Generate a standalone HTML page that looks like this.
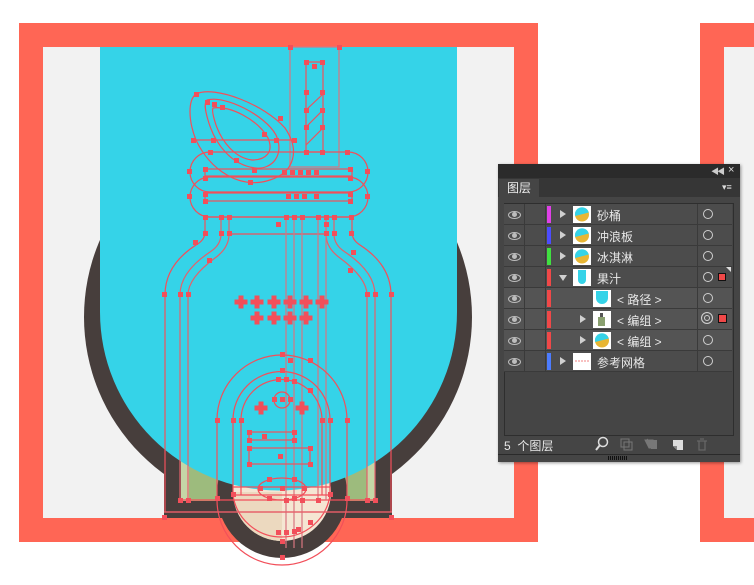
<!DOCTYPE html>
<html><head><meta charset="utf-8"><style>
html,body{margin:0;padding:0;background:#fff;width:754px;height:585px;overflow:hidden;position:relative;font-family:"Liberation Sans","Noto Sans CJK SC",sans-serif}
.abs{position:absolute}
.panel{left:498px;top:164px;width:242px;height:298px;background:#454545;box-shadow:1px 1px 3px rgba(0,0,0,.4)}
.row{position:absolute;left:6px;width:228px;height:20px;border-bottom:1px solid #3a3a3a;background:#4c4c4c}
.row.sub{background:#545454}
.row .c1{position:absolute;left:0;top:0;width:20px;height:20px;border-right:1px solid #3a3a3a}
.row .c2{position:absolute;left:21px;top:0;width:20px;height:20px;border-right:1px solid #3a3a3a}
.row .bar{position:absolute;left:43px;top:2px;width:4px;height:17px}
.row .tri{position:absolute;top:6px;width:0;height:0;border-top:4px solid transparent;border-bottom:4px solid transparent;border-left:6px solid #d0d0d0}
.row .th{position:absolute;top:2px;width:16px;height:15px;border:1px solid #fff;background:#fff;overflow:hidden}
.row .nm{position:absolute;top:3px;font-size:12px;color:#e8e8e8;white-space:nowrap}
.row .dv{position:absolute;left:193px;top:0;width:1px;height:20px;background:#3a3a3a}
.row .ci{position:absolute;left:199px;top:5px;width:8px;height:8px;border:1px solid #cfcfcf;border-radius:50%}
.eye{position:absolute;left:4px;top:7px;width:11px;height:6px;border:1px solid #bdbdbd;border-radius:50%}
.eye:after{content:"";position:absolute;left:3px;top:0;width:5px;height:5px;border-radius:50%;background:#bdbdbd}
</style></head><body>
<svg class="abs" style="left:0;top:0" width="754" height="585" viewBox="0 0 754 585">
<defs><path id="p" d="M-2.5 -6.5h5v4h4v5h-4v4h-5v-4h-4v-5h4z"/>
<g id="th"><circle cx="8" cy="7.5" r="7" fill="#e8b634"/><path d="M1.2 9 A7 7 0 0 1 14.8 5.5 Z" fill="#35d3e8"/></g></defs>
<rect x="19" y="23" width="519" height="519" fill="#ff6655"/>
<rect x="43" y="47" width="471" height="471" fill="#f2f2f2"/>
<rect x="700" y="23" width="60" height="519" fill="#ff6655"/>
<rect x="724" y="47" width="40" height="471" fill="#f2f2f2"/>
<circle cx="278" cy="317" r="194" fill="#473e3c"/>
<rect x="164" y="460" width="228" height="58" fill="#473e3c"/>
<rect x="181" y="440" width="194" height="61" fill="#9dbb7d"/>
<rect x="181" y="440" width="8" height="61" fill="#c5d6a6"/>
<rect x="367" y="440" width="8" height="61" fill="#c5d6a6"/>
<rect x="19" y="518" width="519" height="24" fill="#ff6655"/>
<rect x="700" y="518" width="60" height="24" fill="#ff6655"/>
<circle cx="282" cy="493" r="65" fill="#473e3c"/>
<circle cx="282" cy="492" r="49" fill="#f5e6d3"/>
<path d="M233 492 A49 49 0 0 0 282 541 L282 492Z" fill="#ecd9bf"/>
<path d="M100 47 H457 V312 A178.5 178.5 0 0 1 100 312 Z" fill="#35d3e8"/>
<g fill="none" stroke="#f24f5a" stroke-width="1.2">
<rect x="290" y="47" width="49" height="120" stroke="#d87680"/>
<rect x="306" y="62" width="17" height="90"/>
<path d="M306 110 L323 94 M306 127 L323 110 M306 145 L323 128"/>
<path d="M196 94 C215 85 265 105 285 128 C300 150 295 172 270 180 C240 190 210 170 196 140 C188 120 188 100 196 94Z"/>
<path d="M207 100 C225 95 265 115 276 135 C285 155 272 170 255 168 C232 165 215 145 208 120 C205 110 204 103 207 100Z"/>
<path d="M213 108 C230 105 258 120 268 138 C274 152 266 160 252 160 C235 158 222 142 216 125 C213 116 212 110 213 108Z"/>
<path d="M194 140 H293"/>
<rect x="190" y="152" width="178" height="40" rx="20"/>
<rect x="190" y="177" width="178" height="40" rx="20"/>
<rect x="205" y="169" width="147" height="7"/>
<rect x="205" y="193" width="147" height="8"/>
<path d="M205 217 H352 M229 234 H326"/>
<path d="M205 217 V232 Q205 240 196 245 Q165 265 165 295 V512 H391 V295 Q391 265 360 245 Q352 240 352 232 V217"/>
<path d="M221 217 V234 Q221 245 210 252 Q180 272 180 295 V500 M334 217 V234 Q334 245 345 252 Q375 272 375 295 V500" stroke="#e5606a"/>
<path d="M229 217 V234 Q229 248 215 258 Q188 278 188 295 V500 M326 217 V234 Q326 248 340 258 Q367 278 367 295 V500" stroke="#e5606a"/>
<path d="M180 500 H375" />
<path d="M286 217 V548 M294 217 V548 M302 217 V548 M318 217 V500 M326 217 V500" stroke="#d87680"/>
<path d="M217 498 V420 A65 65 0 0 1 347 420 V498"/>
<path d="M233 495 V420 A48.5 48.5 0 0 1 330 420 V495"/>
<path d="M241 495 V420 A40.5 40.5 0 0 1 322 420 V495"/>
<circle cx="282" cy="400" r="8"/>
<rect x="249" y="432" width="45" height="8"/>
<rect x="249" y="448" width="61" height="16"/>
<ellipse cx="282" cy="489" rx="24" ry="11"/>
<path d="M233 487 H330 M233 495 H330"/>
<path d="M217 500 A65 65 0 0 0 347 500"/>
<path d="M233 495 A49 49 0 0 0 330 495"/>
<path d="M164 512 H392" stroke="#e5606a"/>
</g>
<g fill="#f24f5a">
<use href="#p" x="241" y="302"/><use href="#p" x="257" y="302"/><use href="#p" x="274" y="302"/><use href="#p" x="290" y="302"/><use href="#p" x="306" y="302"/><use href="#p" x="322" y="302"/>
<use href="#p" x="257" y="318"/><use href="#p" x="274" y="318"/><use href="#p" x="290" y="318"/><use href="#p" x="306" y="318"/>
<use href="#p" x="261" y="408"/><use href="#p" x="302" y="408"/>
<g>
<rect x="288" y="45" width="5" height="5"/><rect x="337" y="45" width="5" height="5"/>
<rect x="304" y="60" width="5" height="5"/><rect x="320" y="60" width="5" height="5"/><rect x="312" y="64" width="5" height="5"/>
<rect x="304" y="90" width="5" height="5"/><rect x="320" y="90" width="5" height="5"/><rect x="304" y="108" width="5" height="5"/><rect x="320" y="108" width="5" height="5"/><rect x="304" y="125" width="5" height="5"/><rect x="320" y="125" width="5" height="5"/><rect x="304" y="150" width="5" height="5"/><rect x="320" y="150" width="5" height="5"/>
<rect x="194" y="92" width="5" height="5"/><rect x="205" y="100" width="5" height="5"/><rect x="212" y="102" width="5" height="5"/><rect x="220" y="105" width="5" height="5"/><rect x="278" y="116" width="5" height="5"/><rect x="262" y="132" width="5" height="5"/><rect x="274" y="138" width="5" height="5"/><rect x="191" y="138" width="5" height="5"/><rect x="211" y="138" width="5" height="5"/><rect x="292" y="138" width="5" height="5"/><rect x="234" y="158" width="5" height="5"/><rect x="252" y="168" width="5" height="5"/><rect x="248" y="180" width="5" height="5"/>
<rect x="208" y="150" width="5" height="5"/><rect x="345" y="150" width="5" height="5"/>
<rect x="187" y="169" width="5" height="5"/><rect x="365" y="169" width="5" height="5"/><rect x="187" y="194" width="5" height="5"/><rect x="365" y="194" width="5" height="5"/>
<rect x="203" y="167" width="5" height="5"/><rect x="348" y="167" width="5" height="5"/><rect x="203" y="176" width="5" height="5"/><rect x="348" y="176" width="5" height="5"/><rect x="290" y="170" width="5" height="5"/><rect x="298" y="170" width="5" height="5"/><rect x="306" y="170" width="5" height="5"/><rect x="314" y="170" width="5" height="5"/><rect x="282" y="170" width="5" height="5"/>
<rect x="203" y="192" width="5" height="5"/><rect x="348" y="192" width="5" height="5"/><rect x="203" y="199" width="5" height="5"/><rect x="348" y="199" width="5" height="5"/><rect x="286" y="194" width="5" height="5"/><rect x="294" y="194" width="5" height="5"/><rect x="302" y="194" width="5" height="5"/><rect x="314" y="194" width="5" height="5"/>
<rect x="203" y="215" width="5" height="5"/><rect x="219" y="215" width="5" height="5"/><rect x="227" y="215" width="5" height="5"/><rect x="284" y="215" width="5" height="5"/><rect x="292" y="215" width="5" height="5"/><rect x="300" y="215" width="5" height="5"/><rect x="316" y="215" width="5" height="5"/><rect x="324" y="215" width="5" height="5"/><rect x="332" y="215" width="5" height="5"/><rect x="349" y="215" width="5" height="5"/>
<rect x="203" y="231" width="5" height="5"/><rect x="219" y="231" width="5" height="5"/><rect x="227" y="231" width="5" height="5"/><rect x="324" y="231" width="5" height="5"/><rect x="332" y="231" width="5" height="5"/><rect x="349" y="231" width="5" height="5"/><rect x="276" y="222" width="5" height="5"/><rect x="324" y="222" width="5" height="5"/>
<rect x="193" y="240" width="5" height="5"/><rect x="207" y="258" width="5" height="5"/><rect x="351" y="250" width="5" height="5"/><rect x="348" y="268" width="5" height="5"/>
<rect x="162" y="292" width="5" height="5"/><rect x="178" y="292" width="5" height="5"/><rect x="186" y="292" width="5" height="5"/><rect x="365" y="292" width="5" height="5"/><rect x="373" y="292" width="5" height="5"/><rect x="389" y="292" width="5" height="5"/>
<rect x="280" y="352" width="5" height="5"/><rect x="288" y="358" width="5" height="5"/><rect x="308" y="358" width="5" height="5"/><rect x="280" y="368" width="5" height="5"/><rect x="276" y="377" width="5" height="5"/><rect x="284" y="377" width="5" height="5"/><rect x="292" y="379" width="5" height="5"/><rect x="308" y="388" width="5" height="5"/>
<rect x="280" y="397" width="5" height="5"/><rect x="272" y="397" width="5" height="5"/><rect x="288" y="397" width="5" height="5"/>
<rect x="215" y="418" width="5" height="5"/><rect x="231" y="418" width="5" height="5"/><rect x="239" y="418" width="5" height="5"/><rect x="320" y="418" width="5" height="5"/><rect x="328" y="418" width="5" height="5"/><rect x="345" y="418" width="5" height="5"/>
<rect x="247" y="430" width="5" height="5"/><rect x="292" y="430" width="5" height="5"/><rect x="247" y="438" width="5" height="5"/><rect x="292" y="438" width="5" height="5"/><rect x="262" y="434" width="5" height="5"/><rect x="247" y="446" width="5" height="5"/><rect x="308" y="446" width="5" height="5"/><rect x="247" y="462" width="5" height="5"/><rect x="308" y="462" width="5" height="5"/><rect x="278" y="454" width="5" height="5"/>
<rect x="267" y="477" width="5" height="5"/><rect x="292" y="477" width="5" height="5"/><rect x="258" y="486" width="5" height="5"/><rect x="302" y="486" width="5" height="5"/><rect x="280" y="486" width="5" height="5"/><rect x="267" y="496" width="5" height="5"/><rect x="292" y="496" width="5" height="5"/>
<rect x="215" y="496" width="5" height="5"/><rect x="345" y="496" width="5" height="5"/><rect x="231" y="492" width="5" height="5"/><rect x="328" y="492" width="5" height="5"/>
<rect x="178" y="498" width="5" height="5"/><rect x="186" y="498" width="5" height="5"/><rect x="365" y="498" width="5" height="5"/><rect x="373" y="498" width="5" height="5"/><rect x="284" y="498" width="5" height="5"/><rect x="300" y="498" width="5" height="5"/><rect x="316" y="498" width="5" height="5"/>
<rect x="162" y="515" width="5" height="5"/><rect x="389" y="515" width="5" height="5"/><rect x="308" y="520" width="5" height="5"/>
<rect x="276" y="530" width="5" height="5"/><rect x="284" y="530" width="5" height="5"/><rect x="292" y="529" width="5" height="5"/><rect x="296" y="527" width="5" height="5"/>
<rect x="280" y="539" width="5" height="5"/><rect x="280" y="555" width="5" height="5"/>
</g></g>
</svg>

<div class="abs panel">
  <div class="abs" style="left:0;top:0;width:242px;height:14px;background:#2b2b2b"></div>
  <div class="abs" style="left:213px;top:2px;font-size:8px;color:#ccc;letter-spacing:-2px">◀◀</div>
  <div class="abs" style="left:230px;top:0px;font-size:11px;color:#ddd">×</div>
  <div class="abs" style="left:0;top:14px;width:242px;height:19px;background:#363636"></div>
  <div class="abs" style="left:1px;top:15px;width:40px;height:19px;background:#454545;font-size:12px;color:#eee;line-height:18px;text-align:center">图层</div>
  <div class="abs" style="left:224px;top:18px;font-size:9px;color:#ddd">▾≡</div>
  <div class="abs" style="left:6px;top:39px;width:228px;height:231px;border:1px solid #2e2e2e;background:#454545"></div>

  <div class="row" style="top:40px"><div class="c1"><div class="eye"></div></div><div class="c2"></div><div class="bar" style="background:#e040e8"></div><div class="tri" style="left:56px"></div><div class="th" style="left:69px"><svg width="16" height="15"><circle cx="8" cy="7.5" r="7" fill="#e8b634"/><path d="M1.2 9 A7 7 0 0 1 14.8 5.5 Z" fill="#35d3e8"/></svg></div><div class="nm" style="left:93px">砂桶</div><div class="dv"></div><div class="ci"></div></div>
  <div class="row" style="top:61px"><div class="c1"><div class="eye"></div></div><div class="c2"></div><div class="bar" style="background:#4c4cff"></div><div class="tri" style="left:56px"></div><div class="th" style="left:69px"><svg width="16" height="15"><circle cx="8" cy="7.5" r="7" fill="#e8b634"/><path d="M1.2 9 A7 7 0 0 1 14.8 5.5 Z" fill="#35d3e8"/></svg></div><div class="nm" style="left:93px">冲浪板</div><div class="dv"></div><div class="ci"></div></div>
  <div class="row" style="top:82px"><div class="c1"><div class="eye"></div></div><div class="c2"></div><div class="bar" style="background:#40e040"></div><div class="tri" style="left:56px"></div><div class="th" style="left:69px"><svg width="16" height="15"><circle cx="8" cy="7.5" r="7" fill="#e8b634"/><path d="M1.2 9 A7 7 0 0 1 14.8 5.5 Z" fill="#35d3e8"/></svg></div><div class="nm" style="left:93px">冰淇淋</div><div class="dv"></div><div class="ci"></div></div>
  <div class="row" style="top:103px"><div class="c1"><div class="eye"></div></div><div class="c2"></div><div class="bar" style="background:#f04848"></div><div class="abs" style="left:55px;top:8px;border-left:4px solid transparent;border-right:4px solid transparent;border-top:6px solid #d0d0d0"></div><div class="th" style="left:69px"><svg width="16" height="15"><path d="M4 0 H12 V10 A4 4 0 0 1 4 10Z" fill="#35d3e8"/></svg></div><div class="nm" style="left:93px">果汁</div><div class="dv"></div><div class="ci"></div><div class="abs" style="left:214px;top:6px;width:6px;height:6px;background:#f04848;border:1px solid #111"></div><div class="abs" style="left:222px;top:0;border-left:5px solid transparent;border-top:5px solid #ddd"></div></div>
  <div class="row sub" style="top:124px"><div class="c1"><div class="eye"></div></div><div class="c2"></div><div class="bar" style="background:#f04848"></div><div class="th" style="left:89px"><svg width="16" height="15"><path d="M2 0 H14 V7 A6 6 0 0 1 2 7Z" fill="#35d3e8"/></svg></div><div class="nm" style="left:113px">&lt; 路径 &gt;</div><div class="dv"></div><div class="ci"></div></div>
  <div class="row sub" style="top:145px"><div class="c1"><div class="eye"></div></div><div class="c2"></div><div class="bar" style="background:#f04848"></div><div class="tri" style="left:76px"></div><div class="th" style="left:89px"><svg width="16" height="15"><rect x="6" y="1" width="3" height="4" fill="#555"/><rect x="4" y="5" width="7" height="9" fill="#8aa070"/></svg></div><div class="nm" style="left:113px">&lt; 编组 &gt;</div><div class="dv"></div><div class="abs" style="left:197px;top:3px;width:10px;height:10px;border:1px solid #cfcfcf;border-radius:50%;box-shadow:inset 0 0 0 2px #545454,inset 0 0 0 3px #cfcfcf"></div><div class="abs" style="left:214px;top:5px;width:7px;height:7px;background:#f04848;border:1px solid #111"></div></div>
  <div class="row sub" style="top:166px"><div class="c1"><div class="eye"></div></div><div class="c2"></div><div class="bar" style="background:#f04848"></div><div class="tri" style="left:76px"></div><div class="th" style="left:89px"><svg width="16" height="15"><circle cx="8" cy="7.5" r="7" fill="#e8b634"/><path d="M1.2 9 A7 7 0 0 1 14.8 5.5 Z" fill="#35d3e8"/></svg></div><div class="nm" style="left:113px">&lt; 编组 &gt;</div><div class="dv"></div><div class="ci"></div></div>
  <div class="row" style="top:187px"><div class="c1"><div class="eye"></div></div><div class="c2"></div><div class="bar" style="background:#4c7cff"></div><div class="tri" style="left:56px"></div><div class="th" style="left:69px"><svg width="16" height="15"><path d="M1 7 H15" stroke="#f08080" stroke-dasharray="2 1"/></svg></div><div class="nm" style="left:93px">参考网格</div><div class="dv"></div><div class="ci"></div></div>

  <div class="abs" style="left:6px;top:273px;font-size:12px;color:#e8e8e8">5 &nbsp;个图层</div>
  <svg class="abs" style="left:95px;top:272px" width="140" height="16">
    <circle cx="10" cy="6" r="4.5" fill="none" stroke="#ddd" stroke-width="1.5"/><path d="M7 9 L3 14" stroke="#ddd" stroke-width="2"/>
    <rect x="28" y="3" width="8" height="8" fill="none" stroke="#777"/><rect x="31" y="6" width="8" height="8" fill="none" stroke="#777"/>
    <path d="M52 4 H60 V12 H56 Z M54 3 L57 6" fill="#777" stroke="#777"/><rect x="58" y="4" width="6" height="9" fill="#777"/>
    <path d="M80 4 H90 V14 H84 L80 10Z" fill="#ddd"/><path d="M80 10 H84 V14" fill="#888"/>
    <path d="M104 5 H114 M106 5 V14 H112 V5 M107 3 H111" fill="none" stroke="#666" stroke-width="1.3"/>
  </svg>
  <div class="abs" style="left:0;top:290px;width:242px;height:1px;background:#2a2a2a"></div>
  <div class="abs" style="left:110px;top:292px;width:20px;height:4px;background:repeating-linear-gradient(90deg,#111 0 1px,transparent 1px 2px)"></div>
</div>
</body></html>
